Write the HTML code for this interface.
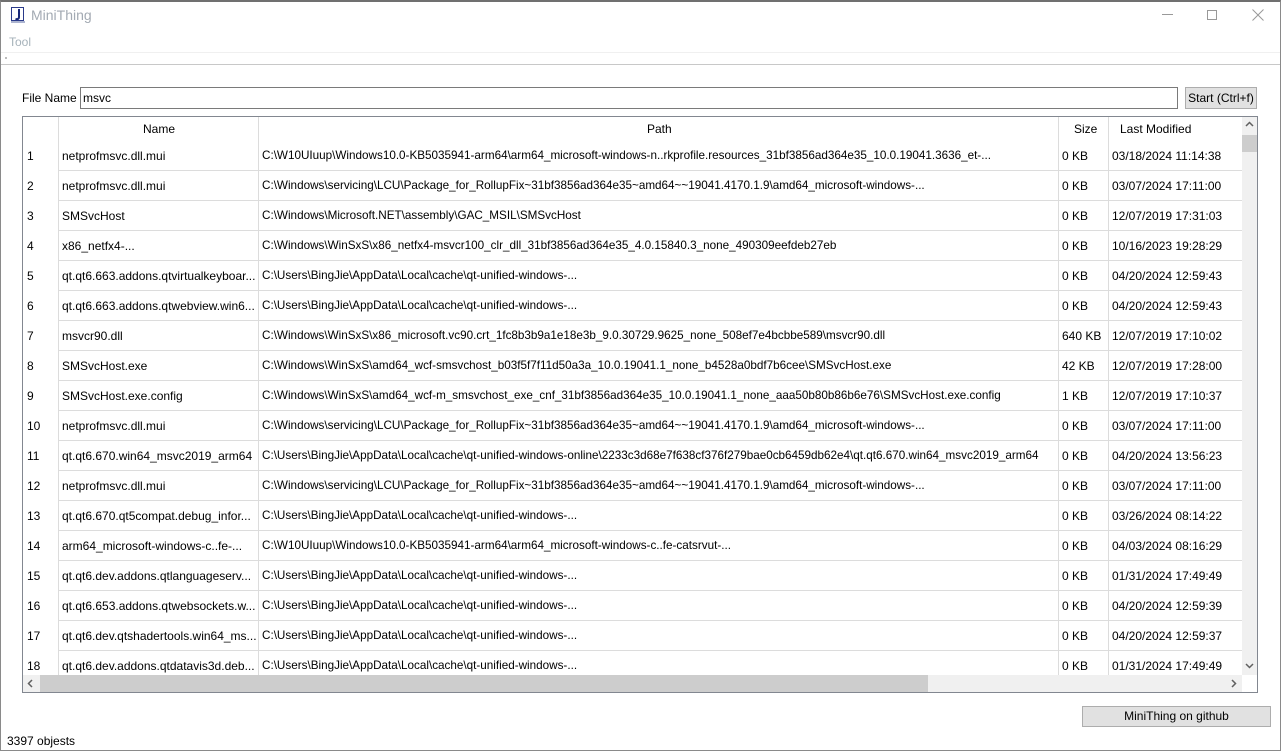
<!DOCTYPE html>
<html><head><meta charset="utf-8">
<style>
*{margin:0;padding:0;box-sizing:border-box}
body{width:1281px;height:751px;background:#fff;font-family:"Liberation Sans",sans-serif;font-size:12px;color:#000;position:relative;overflow:hidden}
.a{position:absolute;white-space:nowrap}
.win{position:absolute;left:0;top:0;width:1281px;height:751px;border:1px solid #8a8a8a;border-top:2px solid #707070}
.cell{position:absolute;white-space:nowrap;overflow:hidden;line-height:30px;height:30px}
.p{width:793px;font-size:11.7px}
.vl{position:absolute;top:117px;width:1px;height:558px;background:#dcdcdc}
.hl{position:absolute;left:58px;width:1184px;height:1px;background:#dcdcdc}
</style></head><body>
<div class="win"></div>
<svg class="a" style="left:10px;top:6px" width="16" height="18" viewBox="0 0 16 18">
<rect x="1.5" y="1.5" width="12" height="13" fill="none" stroke="#2a3a8a" stroke-width="1"/>
<path d="M9 3v8c0 2-1.5 2.5-3.5 2" fill="none" stroke="#1a2a7a" stroke-width="2"/>
<path d="M1 16h14" stroke="#5a6aa0" stroke-width="1"/>
</svg>
<div class="a" style="left:31px;top:7px;font-size:14px;color:#a3aab3">MiniThing</div>
<div class="a" style="left:1162px;top:14px;width:11px;height:1px;background:#999"></div>
<div class="a" style="left:1207px;top:10px;width:10px;height:10px;border:1px solid #999"></div>
<svg class="a" style="left:1252px;top:9px" width="12" height="12"><path d="M0.5 0.5L11.5 11.5M11.5 0.5L0.5 11.5" stroke="#999" stroke-width="1"/></svg>
<div class="a" style="left:9px;top:35px;font-size:12px;color:#a6b2ba">Tool</div>
<div class="a" style="left:1px;top:52px;width:1279px;height:1px;background:#f0f0f0"></div>
<div class="a" style="left:1px;top:64px;width:1279px;height:1px;background:#c8c8c8"></div>
<div class="a" style="left:5px;top:57px;width:2px;height:2px;background:#bbb"></div>
<div class="a" style="left:22px;top:91px">File Name</div>
<div class="a" style="left:80px;top:87px;width:1098px;height:22px;border:1px solid #7a7a7a;padding:3px 2px">msvc</div>
<div class="a" style="left:1185px;top:87px;width:72px;height:22px;border:1px solid #adadad;background:#e1e1e1;text-align:center;line-height:20px">Start (Ctrl+f)</div>
<div class="a" style="left:22px;top:116px;width:1236px;height:577px;border:1px solid #828790"></div>
<div class="vl" style="left:58px"></div>
<div class="vl" style="left:258px"></div>
<div class="vl" style="left:1058px"></div>
<div class="vl" style="left:1108px"></div>
<div class="a" style="left:143px;top:122px">Name</div>
<div class="a" style="left:647px;top:122px">Path</div>
<div class="a" style="left:1074px;top:122px">Size</div>
<div class="a" style="left:1120px;top:122px">Last Modified</div>
<div class="a" style="left:1242px;top:117px;width:15px;height:558px;background:#f0f0f0"></div>
<div class="a" style="left:1242px;top:135px;width:15px;height:17px;background:#cdcdcd"></div>
<svg class="a" style="left:1245px;top:121px" width="9" height="7"><path d="M1 5L4.5 1.5L8 5" fill="none" stroke="#606060" stroke-width="1.5"/></svg>
<svg class="a" style="left:1245px;top:662px" width="9" height="7"><path d="M1 2L4.5 5.5L8 2" fill="none" stroke="#606060" stroke-width="1.5"/></svg>
<div class="a" style="left:23px;top:675px;width:1219px;height:17px;background:#f0f0f0"></div>
<div class="a" style="left:40px;top:675px;width:888px;height:17px;background:#cdcdcd"></div>
<svg class="a" style="left:27px;top:679px" width="7" height="9"><path d="M5 1L1.5 4.5L5 8" fill="none" stroke="#606060" stroke-width="1.5"/></svg>
<svg class="a" style="left:1230px;top:679px" width="7" height="9"><path d="M2 1L5.5 4.5L2 8" fill="none" stroke="#606060" stroke-width="1.5"/></svg>

<div class="hl" style="top:170px"></div><div class="hl" style="top:200px"></div><div class="hl" style="top:230px"></div><div class="hl" style="top:260px"></div><div class="hl" style="top:290px"></div><div class="hl" style="top:320px"></div><div class="hl" style="top:350px"></div><div class="hl" style="top:380px"></div><div class="hl" style="top:410px"></div><div class="hl" style="top:440px"></div><div class="hl" style="top:470px"></div><div class="hl" style="top:500px"></div><div class="hl" style="top:530px"></div><div class="hl" style="top:560px"></div><div class="hl" style="top:590px"></div><div class="hl" style="top:620px"></div><div class="hl" style="top:650px"></div>

<div class="cell" style="left:27px;top:141px">1</div><div class="cell" style="left:62px;top:141px">netprofmsvc.dll.mui</div><div class="cell p" style="left:262px;top:141px">C:\W10UIuup\Windows10.0-KB5035941-arm64\arm64_microsoft-windows-n..rkprofile.resources_31bf3856ad364e35_10.0.19041.3636_et-...</div><div class="cell" style="left:1062px;top:141px">0 KB</div><div class="cell" style="left:1112px;top:141px">03/18/2024 11:14:38</div>
<div class="cell" style="left:27px;top:171px">2</div><div class="cell" style="left:62px;top:171px">netprofmsvc.dll.mui</div><div class="cell p" style="left:262px;top:171px">C:\Windows\servicing\LCU\Package_for_RollupFix~31bf3856ad364e35~amd64~~19041.4170.1.9\amd64_microsoft-windows-...</div><div class="cell" style="left:1062px;top:171px">0 KB</div><div class="cell" style="left:1112px;top:171px">03/07/2024 17:11:00</div>
<div class="cell" style="left:27px;top:201px">3</div><div class="cell" style="left:62px;top:201px">SMSvcHost</div><div class="cell p" style="left:262px;top:201px">C:\Windows\Microsoft.NET\assembly\GAC_MSIL\SMSvcHost</div><div class="cell" style="left:1062px;top:201px">0 KB</div><div class="cell" style="left:1112px;top:201px">12/07/2019 17:31:03</div>
<div class="cell" style="left:27px;top:231px">4</div><div class="cell" style="left:62px;top:231px">x86_netfx4-...</div><div class="cell p" style="left:262px;top:231px">C:\Windows\WinSxS\x86_netfx4-msvcr100_clr_dll_31bf3856ad364e35_4.0.15840.3_none_490309eefdeb27eb</div><div class="cell" style="left:1062px;top:231px">0 KB</div><div class="cell" style="left:1112px;top:231px">10/16/2023 19:28:29</div>
<div class="cell" style="left:27px;top:261px">5</div><div class="cell" style="left:62px;top:261px;width:194px">qt.qt6.663.addons.qtvirtualkeyboar...</div><div class="cell p" style="left:262px;top:261px">C:\Users\BingJie\AppData\Local\cache\qt-unified-windows-...</div><div class="cell" style="left:1062px;top:261px">0 KB</div><div class="cell" style="left:1112px;top:261px">04/20/2024 12:59:43</div>
<div class="cell" style="left:27px;top:291px">6</div><div class="cell" style="left:62px;top:291px;width:194px">qt.qt6.663.addons.qtwebview.win6...</div><div class="cell p" style="left:262px;top:291px">C:\Users\BingJie\AppData\Local\cache\qt-unified-windows-...</div><div class="cell" style="left:1062px;top:291px">0 KB</div><div class="cell" style="left:1112px;top:291px">04/20/2024 12:59:43</div>
<div class="cell" style="left:27px;top:321px">7</div><div class="cell" style="left:62px;top:321px">msvcr90.dll</div><div class="cell p" style="left:262px;top:321px">C:\Windows\WinSxS\x86_microsoft.vc90.crt_1fc8b3b9a1e18e3b_9.0.30729.9625_none_508ef7e4bcbbe589\msvcr90.dll</div><div class="cell" style="left:1062px;top:321px">640 KB</div><div class="cell" style="left:1112px;top:321px">12/07/2019 17:10:02</div>
<div class="cell" style="left:27px;top:351px">8</div><div class="cell" style="left:62px;top:351px">SMSvcHost.exe</div><div class="cell p" style="left:262px;top:351px">C:\Windows\WinSxS\amd64_wcf-smsvchost_b03f5f7f11d50a3a_10.0.19041.1_none_b4528a0bdf7b6cee\SMSvcHost.exe</div><div class="cell" style="left:1062px;top:351px">42 KB</div><div class="cell" style="left:1112px;top:351px">12/07/2019 17:28:00</div>
<div class="cell" style="left:27px;top:381px">9</div><div class="cell" style="left:62px;top:381px">SMSvcHost.exe.config</div><div class="cell p" style="left:262px;top:381px">C:\Windows\WinSxS\amd64_wcf-m_smsvchost_exe_cnf_31bf3856ad364e35_10.0.19041.1_none_aaa50b80b86b6e76\SMSvcHost.exe.config</div><div class="cell" style="left:1062px;top:381px">1 KB</div><div class="cell" style="left:1112px;top:381px">12/07/2019 17:10:37</div>
<div class="cell" style="left:27px;top:411px">10</div><div class="cell" style="left:62px;top:411px">netprofmsvc.dll.mui</div><div class="cell p" style="left:262px;top:411px">C:\Windows\servicing\LCU\Package_for_RollupFix~31bf3856ad364e35~amd64~~19041.4170.1.9\amd64_microsoft-windows-...</div><div class="cell" style="left:1062px;top:411px">0 KB</div><div class="cell" style="left:1112px;top:411px">03/07/2024 17:11:00</div>
<div class="cell" style="left:27px;top:441px">11</div><div class="cell" style="left:62px;top:441px">qt.qt6.670.win64_msvc2019_arm64</div><div class="cell p" style="left:262px;top:441px">C:\Users\BingJie\AppData\Local\cache\qt-unified-windows-online\2233c3d68e7f638cf376f279bae0cb6459db62e4\qt.qt6.670.win64_msvc2019_arm64</div><div class="cell" style="left:1062px;top:441px">0 KB</div><div class="cell" style="left:1112px;top:441px">04/20/2024 13:56:23</div>
<div class="cell" style="left:27px;top:471px">12</div><div class="cell" style="left:62px;top:471px">netprofmsvc.dll.mui</div><div class="cell p" style="left:262px;top:471px">C:\Windows\servicing\LCU\Package_for_RollupFix~31bf3856ad364e35~amd64~~19041.4170.1.9\amd64_microsoft-windows-...</div><div class="cell" style="left:1062px;top:471px">0 KB</div><div class="cell" style="left:1112px;top:471px">03/07/2024 17:11:00</div>
<div class="cell" style="left:27px;top:501px">13</div><div class="cell" style="left:62px;top:501px;width:194px">qt.qt6.670.qt5compat.debug_infor...</div><div class="cell p" style="left:262px;top:501px">C:\Users\BingJie\AppData\Local\cache\qt-unified-windows-...</div><div class="cell" style="left:1062px;top:501px">0 KB</div><div class="cell" style="left:1112px;top:501px">03/26/2024 08:14:22</div>
<div class="cell" style="left:27px;top:531px">14</div><div class="cell" style="left:62px;top:531px;width:194px">arm64_microsoft-windows-c..fe-...</div><div class="cell p" style="left:262px;top:531px">C:\W10UIuup\Windows10.0-KB5035941-arm64\arm64_microsoft-windows-c..fe-catsrvut-...</div><div class="cell" style="left:1062px;top:531px">0 KB</div><div class="cell" style="left:1112px;top:531px">04/03/2024 08:16:29</div>
<div class="cell" style="left:27px;top:561px">15</div><div class="cell" style="left:62px;top:561px;width:194px">qt.qt6.dev.addons.qtlanguageserv...</div><div class="cell p" style="left:262px;top:561px">C:\Users\BingJie\AppData\Local\cache\qt-unified-windows-...</div><div class="cell" style="left:1062px;top:561px">0 KB</div><div class="cell" style="left:1112px;top:561px">01/31/2024 17:49:49</div>
<div class="cell" style="left:27px;top:591px">16</div><div class="cell" style="left:62px;top:591px;width:194px">qt.qt6.653.addons.qtwebsockets.w...</div><div class="cell p" style="left:262px;top:591px">C:\Users\BingJie\AppData\Local\cache\qt-unified-windows-...</div><div class="cell" style="left:1062px;top:591px">0 KB</div><div class="cell" style="left:1112px;top:591px">04/20/2024 12:59:39</div>
<div class="cell" style="left:27px;top:621px">17</div><div class="cell" style="left:62px;top:621px;width:194px">qt.qt6.dev.qtshadertools.win64_ms...</div><div class="cell p" style="left:262px;top:621px">C:\Users\BingJie\AppData\Local\cache\qt-unified-windows-...</div><div class="cell" style="left:1062px;top:621px">0 KB</div><div class="cell" style="left:1112px;top:621px">04/20/2024 12:59:37</div>
<div class="cell" style="left:27px;top:651px">18</div><div class="cell" style="left:62px;top:651px;width:194px">qt.qt6.dev.addons.qtdatavis3d.deb...</div><div class="cell p" style="left:262px;top:651px">C:\Users\BingJie\AppData\Local\cache\qt-unified-windows-...</div><div class="cell" style="left:1062px;top:651px">0 KB</div><div class="cell" style="left:1112px;top:651px">01/31/2024 17:49:49</div>

<div class="a" style="left:1082px;top:706px;width:189px;height:21px;border:1px solid #adadad;background:#e1e1e1;text-align:center;line-height:19px">MiniThing on github</div>
<div class="a" style="left:7px;top:734px">3397 objests</div>
</body></html>
